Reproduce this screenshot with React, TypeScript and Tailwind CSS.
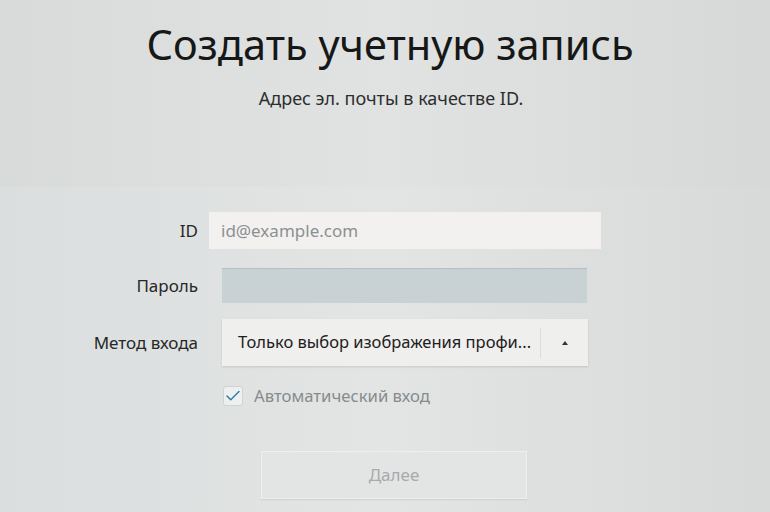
import { Check } from "lucide-react";

const font = { fontFamily: '"Noto Sans", "Open Sans", sans-serif' };

const Label = ({ text }: { text: string }) => (
  <div className="w-[198px] shrink-0 text-right text-[17px] text-[#262828]">{text}</div>
);

export default function App() {
  return (
    <div
      className="flex h-[512px] w-[770px] flex-col overflow-hidden bg-gradient-to-r from-[#d9dbdb] via-[#e1e2e2] to-[#d7d8d8]"
      style={font}
    >
      <h1 className="pt-[14px] pl-[10px] text-center text-[41.5px] leading-[60px] font-normal text-[#161818]">
        Создать учетную запись
      </h1>
      <p className="mt-[12px] pl-[12px] text-center text-[18px] leading-[24px] text-[#2c2e2e]">
        Адрес эл. почты в качестве ID.
      </p>

      <div className="mt-[77px] flex flex-1 flex-col bg-gradient-to-r from-[#dbdede] via-[#e3e5e5] to-[#d8d9d9] pt-[25px]">
        {/* ID */}
        <div className="flex h-[37px] items-center">
          <Label text="ID" />
          <div className="ml-[11px] flex h-[37px] w-[392px] items-center bg-[#f2f1f0] pl-[12px] text-[17px] text-[#8d9090]">
            id@example.com
          </div>
        </div>

        {/* Password */}
        <div className="mt-[19px] flex h-[35px] items-center">
          <Label text="Пароль" />
          <div className="ml-[24px] h-[35px] w-[365px] border-t border-[#b5bfc2] bg-[#c8d1d3]" />
        </div>

        {/* Login method */}
        <div className="mt-[16px] flex h-[47px] items-center">
          <Label text="Метод входа" />
          <div className="ml-[24px] flex h-[47px] w-[366px] items-center bg-[#efefee] shadow-[0_1px_2px_rgba(0,0,0,0.12)]">
            <span className="flex-1 pl-[16px] text-[16.5px] text-[#1e2020]">
              Только выбор изображения профи...
            </span>
            <div className="h-[30px] w-px bg-[#dcdcdc]" />
            <div className="flex w-[47px] justify-center">
              <svg width="6" height="4" viewBox="0 0 6 4">
                <path d="M0 4 L3 0 L6 4 Z" fill="#333" />
              </svg>
            </div>
          </div>
        </div>

        {/* Auto login */}
        <div className="mt-[17px] flex items-center pl-[224px]">
          <div className="flex h-[18px] w-[18px] items-center justify-center rounded-[2px] bg-[#eef0f0] ring-1 ring-[#cfd3d4]">
            <Check size={18} strokeWidth={2} className="text-[#2c80a0]" />
          </div>
          <span className="ml-[12px] text-[16.7px] text-[#878b8c]">Автоматический вход</span>
        </div>

        {/* Next */}
        <div className="mt-[43px] flex pl-[261px]">
          <div className="flex h-[48px] w-[266px] items-center justify-center border border-[#eef0f0] bg-[#e3e5e5] text-[17px] text-[#a6aaac] shadow-[0_1px_1px_rgba(0,0,0,0.08)]">
            Далее
          </div>
        </div>
      </div>
    </div>
  );
}
